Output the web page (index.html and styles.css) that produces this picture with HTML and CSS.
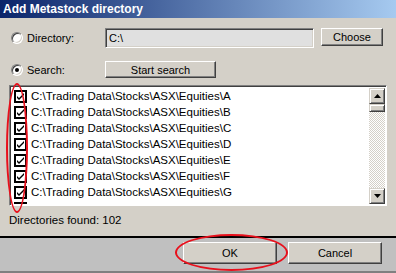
FILE: index.html
```html
<!DOCTYPE html>
<html>
<head>
<meta charset="utf-8">
<link rel="stylesheet" href="styles.css">
</head>
<body>
<div class="window">
  <div class="titlebar">Add Metastock directory</div>
  <div class="content">
    <div class="row row1">
      <label class="opt"><span class="radio"></span><span>Directory:</span></label>
      <div class="field">C:\</div>
      <button class="btn choose">Choose</button>
    </div>
    <div class="row row2">
      <label class="opt"><span class="radio on"><span class="dot"></span></span><span>Search:</span></label>
      <button class="btn start">Start search</button>
    </div>
    <div class="listbox">
      <div class="items">
        <div class="item"><span class="cb"><svg viewBox="0 0 9 9" width="9" height="9"><path d="M1 4 L3 6 L8 1 L8 3 L3 8 L1 6 Z" fill="#000"/></svg></span>C:\Trading Data\Stocks\ASX\Equities\A</div>
        <div class="item"><span class="cb"><svg viewBox="0 0 9 9" width="9" height="9"><path d="M1 4 L3 6 L8 1 L8 3 L3 8 L1 6 Z" fill="#000"/></svg></span>C:\Trading Data\Stocks\ASX\Equities\B</div>
        <div class="item"><span class="cb"><svg viewBox="0 0 9 9" width="9" height="9"><path d="M1 4 L3 6 L8 1 L8 3 L3 8 L1 6 Z" fill="#000"/></svg></span>C:\Trading Data\Stocks\ASX\Equities\C</div>
        <div class="item"><span class="cb"><svg viewBox="0 0 9 9" width="9" height="9"><path d="M1 4 L3 6 L8 1 L8 3 L3 8 L1 6 Z" fill="#000"/></svg></span>C:\Trading Data\Stocks\ASX\Equities\D</div>
        <div class="item"><span class="cb"><svg viewBox="0 0 9 9" width="9" height="9"><path d="M1 4 L3 6 L8 1 L8 3 L3 8 L1 6 Z" fill="#000"/></svg></span>C:\Trading Data\Stocks\ASX\Equities\E</div>
        <div class="item"><span class="cb"><svg viewBox="0 0 9 9" width="9" height="9"><path d="M1 4 L3 6 L8 1 L8 3 L3 8 L1 6 Z" fill="#000"/></svg></span>C:\Trading Data\Stocks\ASX\Equities\F</div>
        <div class="item"><span class="cb"><svg viewBox="0 0 9 9" width="9" height="9"><path d="M1 4 L3 6 L8 1 L8 3 L3 8 L1 6 Z" fill="#000"/></svg></span>C:\Trading Data\Stocks\ASX\Equities\G</div>
        <div class="item"><span class="cb"><svg viewBox="0 0 9 9" width="9" height="9"><path d="M1 4 L3 6 L8 1 L8 3 L3 8 L1 6 Z" fill="#000"/></svg></span>C:\Trading Data\Stocks\ASX\Equities\H</div>
      </div>
      <div class="scrollbar">
        <div class="sbtn"><svg viewBox="0 0 7 4" width="7" height="4"><path d="M3.5 0 L7 4 L0 4 Z" fill="#000"/></svg></div>
        <div class="thumb"></div>
        <div class="track"></div>
        <div class="sbtn"><svg viewBox="0 0 7 4" width="7" height="4"><path d="M0 0 L7 0 L3.5 4 Z" fill="#000"/></svg></div>
      </div>
    </div>
    <div class="status">Directories found: 102</div>
  </div>
  <div class="footer">
    <button class="btn big">OK</button>
    <button class="btn big">Cancel</button>
  </div>
  <div class="ring ring-list"></div>
  <div class="ring ring-ok"></div>
</div>
</body>
</html>
```
FILE: styles.css
```css
* { box-sizing: border-box; }
html, body { margin: 0; padding: 0; }
body { width: 396px; height: 273px; overflow: hidden; background: #d4d0c8; }
.window {
  position: relative;
  width: 396px; height: 273px;
  background: #d4d0c8;
  display: flex; flex-direction: column;
  font-family: "Liberation Sans", Arial, sans-serif;
  font-size: 11px; color: #000;
}
.titlebar {
  height: 18px;
  background: linear-gradient(to right, #0a246a, #a6caf0);
  color: #fff; font-weight: bold; font-size: 12px;
  line-height: 18px; padding-left: 3px;
  font-family: "Liberation Sans", Arial, sans-serif;
}
.content { padding: 10px 10px 0 9px; display: flex; flex-direction: column; }
.row { display: flex; align-items: center; }
.row1 { height: 20px; }
.row2 { margin-top: 13px; height: 17px; }
.opt { display: flex; align-items: center; width: 96px; gap: 4px; padding-left: 2px; }
.radio {
  width: 12px; height: 12px; border-radius: 50%;
  border: 1px solid; border-color: #808080 #fff #fff #808080;
  background: #fff; box-shadow: inset 1px 1px #404040, inset -1px -1px #d4d0c8;
  display: flex; align-items: center; justify-content: center;
}
.dot { width: 4px; height: 4px; border-radius: 50%; background: #000; }
.field {
  width: 209px; height: 20px; margin-left: 0;
  border: 1px solid; border-color: #808080 #fff #fff #808080;
  box-shadow: inset 1px 1px #404040, inset -1px -1px #d4d0c8;
  background: #e0e0e0; line-height: 18px; padding-left: 3px;
}
.btn {
  font-family: "Liberation Sans", Arial, sans-serif; font-size: 11px; color: #000;
  background: #d4d0c8; padding: 0;
  border: 1px solid; border-color: #fff #404040 #404040 #fff;
  box-shadow: inset -1px -1px #808080;
}
.choose { width: 62px; height: 18px; margin-left: 7px; align-self: flex-start; }
.start { width: 111px; height: 17px; }
.listbox {
  margin-top: 7px; width: 378px; height: 121px;
  border: 1px solid; border-color: #808080 #fff #fff #808080;
  box-shadow: inset 1px 1px #404040;
  background: #fff; display: flex; padding: 2px 1px 1px 2px; overflow: hidden;
}
.items { flex: 1; overflow: hidden; padding-top: 0; }
.item { height: 16px; display: flex; align-items: center; white-space: nowrap; gap: 4px; padding-left: 2px; font-size: 11.5px; }
.cb {
  width: 13px; height: 13px; border: 2px solid #000; background: #fff;
  display: flex; align-items: center; justify-content: center; flex: none;
}
.scrollbar { width: 16px; display: flex; flex-direction: column; }
.sbtn {
  height: 16px; background: #d4d0c8;
  border: 1px solid; border-color: #d4d0c8 #404040 #404040 #d4d0c8;
  box-shadow: inset 1px 1px #fff, inset -1px -1px #808080;
  display: flex; align-items: center; justify-content: center;
}
.thumb {
  height: 8px; background: #d4d0c8;
  border: 1px solid; border-color: #d4d0c8 #404040 #404040 #d4d0c8;
  box-shadow: inset 1px 1px #fff, inset -1px -1px #808080;
}
.track {
  flex: 1;
  background-color: #fff;
  background-image: repeating-conic-gradient(#d4d0c8 0 25%, #fff 0 50%);
  background-size: 2px 2px;
}
.status { margin-top: 7px; height: 14px; line-height: 14px; font-size: 11.5px; }
.footer {
  margin-top: auto; height: 37px;
  border-top: 2px solid #000; background: #c0c0c0;
  display: flex; justify-content: flex-end; align-items: flex-start;
  padding: 4px 14px 0 0; gap: 11px;
  border-bottom: 2px solid #808080;
}
.big { width: 94px; height: 22px; }
.ring { position: absolute; border: 2px solid #e8101c; border-radius: 50%; pointer-events: none; }
.ring-list { left: 6px; top: 83px; width: 22px; height: 130px; }
.ring-ok { left: 175px; top: 234px; width: 113px; height: 37px; }
```
